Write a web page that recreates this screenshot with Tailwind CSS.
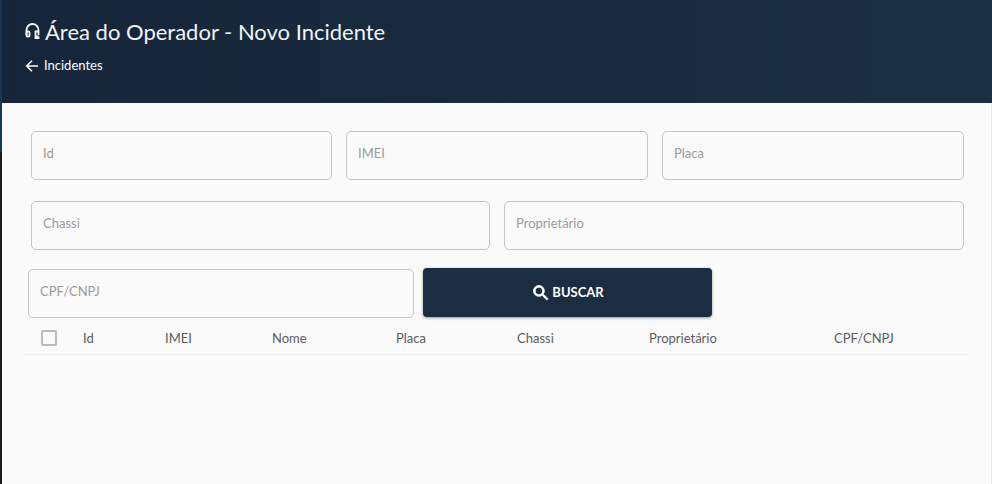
<!DOCTYPE html>
<html lang="pt-BR">
<head>
  <meta charset="UTF-8" />
  <title>Área do Operador - Novo Incidente</title>
  <script src="https://cdn.jsdelivr.net/npm/@tailwindcss/browser@4"></script>
</head>
<body class="h-[484px] w-[992px] overflow-hidden bg-[#fafafa] font-['Lato',sans-serif]">
  <div class="flex h-full">
    <!-- faixa lateral -->
    <div class="w-[2px] shrink-0 flex flex-col">
      <div class="h-[152px] bg-[#1b3650]"></div>
      <div class="flex-1 bg-[#1c1c1c]"></div>
    </div>

    <div class="flex-1 flex flex-col border-r border-[#e6e6e6]">
      <!-- Cabeçalho -->
      <header class="h-[103px] -mr-[1px] bg-linear-to-r from-[#16263a] to-[#1b2f42] pl-[22px] pt-[16px] text-white">
        <h1 class="flex items-center gap-[4px] h-[30px] text-[22px] text-[#f2f4f6]">
          <svg class="w-[17px] h-[18px]" viewBox="0 0 17 18" fill="none" stroke="currentColor" stroke-width="1.800">
            <path d="M2.500 13V8a6 6 0 0 1 12 0v5" />
            <rect x="2.500" y="9.500" width="3" height="5" rx="1" />
            <path d="M14.500 9.500h-3v5h3M14.500 14.500v1.600h-4" />
          </svg>
          Área do Operador - Novo Incidente
        </h1>
        <a class="mt-[8px] flex items-center gap-[4px] h-[24px] text-[13px]">
          <svg class="w-[16px] h-[16px]" viewBox="0 0 16 16" fill="none" stroke="currentColor" stroke-width="1.600">
            <path d="M14 8H3M8 2.700 2.700 8 8 13.300" />
          </svg>
          Incidentes
        </a>
      </header>

      <!-- Formulário -->
      <main class="flex-1 pl-[29px] pt-[28px]">
        <div class="flex gap-[14px]">
          <div class="w-[301px] h-[49px] flex items-center pb-[3px] pl-[11px] border border-[#c4c4c4] rounded-[5px] text-[13px] text-[#9a9a9a]">Id</div>
          <div class="w-[302px] h-[49px] flex items-center pb-[3px] pl-[11px] border border-[#c4c4c4] rounded-[5px] text-[13px] text-[#9a9a9a]">IMEI</div>
          <div class="w-[302px] h-[49px] flex items-center pb-[3px] pl-[11px] border border-[#c4c4c4] rounded-[5px] text-[13px] text-[#9a9a9a]">Placa</div>
        </div>
        <div class="flex gap-[14px] mt-[21px]">
          <div class="w-[459px] h-[49px] flex items-center pb-[3px] pl-[11px] border border-[#c4c4c4] rounded-[5px] text-[13px] text-[#9a9a9a]">Chassi</div>
          <div class="w-[460px] h-[49px] flex items-center pb-[3px] pl-[11px] border border-[#c4c4c4] rounded-[5px] text-[13px] text-[#9a9a9a]">Proprietário</div>
        </div>
        <div class="flex gap-[9px] -ml-[3px] mt-[19px]">
          <div class="w-[386px] h-[49px] flex items-center pb-[3px] pl-[11px] border border-[#c4c4c4] rounded-[5px] text-[13px] text-[#9a9a9a]">CPF/CNPJ</div>
          <button class="w-[289px] h-[49px] -mt-[1px] flex items-center justify-center gap-[1px] bg-[#1b2d40] rounded-[4px] shadow-[0_1px_3px_rgba(0,0,0,0.4)] text-white text-[13px] font-bold">
            <svg class="w-[20px] h-[20px]" viewBox="0 0 24 24" fill="currentColor" stroke="currentColor" stroke-width="1">
              <path d="M15.500 14h-.790l-.280-.270A6.470 6.470 0 0 0 16 9.500 6.500 6.500 0 1 0 9.500 16c1.610 0 3.090-.590 4.230-1.570l.270.280v.790l5 4.990L20.490 19l-4.990-5zm-6 0C7.010 14 5 11.990 5 9.500S7.010 5 9.500 5 14 7.010 14 9.500 11.990 14 9.500 14z" />
            </svg>
            BUSCAR
          </button>
        </div>

        <!-- Tabela -->
        <div class="-ml-[7px] mt-[3px] w-[946px] h-[34px] border-b border-[#eee] flex items-center pt-[2px] text-[13px] text-[#5c5c5c]">
          <span class="ml-[17px] mb-[2px] w-[16px] h-[16px] border-2 border-[#bbb] rounded-[2px]"></span>
          <span class="ml-[26px] w-[82px]">Id</span>
          <span class="w-[107px]">IMEI</span>
          <span class="w-[124px]">Nome</span>
          <span class="w-[121px]">Placa</span>
          <span class="w-[132px]">Chassi</span>
          <span class="w-[185px]">Proprietário</span>
          <span>CPF/CNPJ</span>
        </div>
      </main>
    </div>
  </div>
</body>
</html>
